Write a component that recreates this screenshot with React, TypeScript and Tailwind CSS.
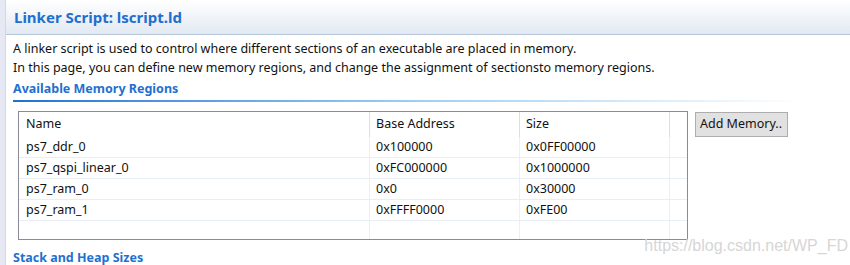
import React from "react";

const rows = [
  ["ps7_ddr_0", "0x100000", "0x0FF00000"],
  ["ps7_qspi_linear_0", "0xFC000000", "0x1000000"],
  ["ps7_ram_0", "0x0", "0x30000"],
  ["ps7_ram_1", "0xFFFF0000", "0xFE00"],
];

export default function App() {
  return (
    <div
      className="relative flex w-[850px] h-[265px] overflow-hidden bg-white text-[#111]"
      style={{ fontFamily: '"Noto Sans", "Noto Sans CJK SC", sans-serif' }}
    >
      <div className="w-[6px] shrink-0 bg-[#e6e8f4] border-r border-[#d2d6e6]" />
      <div className="flex flex-col flex-1 min-w-0">
        <div className="h-[35px] shrink-0 flex items-center pl-[8px] pt-[1px] bg-gradient-to-b from-white to-[#e2e9f2] border-b border-[#b6c6da]">
          <span className="text-[15px] font-bold text-[#1f6fce] leading-none">Linker Script: lscript.ld</span>
        </div>
        <div className="pl-[7px] flex flex-col">
          <div className="mt-[4px] text-[12.5px] leading-[19px]">
            <div>A linker script is used to control where different sections of an executable are placed in memory.</div>
            <div>In this page, you can define new memory regions, and change the assignment of sectionsto memory regions.</div>
          </div>
          <div className="mt-[2px] text-[12.5px] leading-[19px] font-bold text-[#1f70d0]">Available Memory Regions</div>
          <div className="h-[2px] w-[790px] mt-[2px] bg-gradient-to-r from-[#1a72d2] via-[#9ccdf3] to-white" />
          <div className="flex mt-[9px] ml-[5px]">
            <div className="w-[670px] h-[129px] border border-[#8b8b95] text-[12.5px] flex flex-col">
              <div className="grid grid-cols-[351px_150px_150px_1fr] h-[25px]">
                <div className="flex items-center pl-[7px] border-r border-[#dedede]">Name</div>
                <div className="flex items-center pl-[6px] border-r border-[#dedede]">Base Address</div>
                <div className="flex items-center pl-[6px] border-r border-[#dedede]">Size</div>
                <div />
              </div>
              {rows.map((r) => (
                <div key={r[0]} className="grid grid-cols-[351px_150px_150px_1fr] h-[21px] border-b border-[#e9eef6]">
                  <div className="flex items-center pl-[7px] border-r border-[#e8f0fb]">{r[0]}</div>
                  <div className="flex items-center pl-[6px] border-r border-[#e8f0fb]">{r[1]}</div>
                  <div className="flex items-center pl-[6px] border-r border-[#e8f0fb]">{r[2]}</div>
                  <div />
                </div>
              ))}
              <div className="grid grid-cols-[351px_150px_150px_1fr] flex-1">
                <div className="border-r border-[#e8f0fb]" />
                <div className="border-r border-[#e8f0fb]" />
                <div className="border-r border-[#e8f0fb]" />
                <div />
              </div>
            </div>
            <div className="ml-[7px] mt-[1px] w-[93px] h-[25px] bg-[#e1e1e1] border border-[#adadad] text-[12.5px] flex items-center pl-[4px] whitespace-nowrap">
              Add Memory..
            </div>
          </div>
          <div className="mt-[8px] text-[12.5px] leading-[19px] font-bold text-[#1f70d0]">Stack and Heap Sizes</div>
        </div>
      </div>
      <div
        className="absolute right-[2px] top-[234px] text-[16px] text-[#d6d6d6]"
        style={{ fontFamily: '"Liberation Sans", Arial, sans-serif' }}
      >
        https://blog.csdn.net/WP_FD
      </div>
    </div>
  );
}
